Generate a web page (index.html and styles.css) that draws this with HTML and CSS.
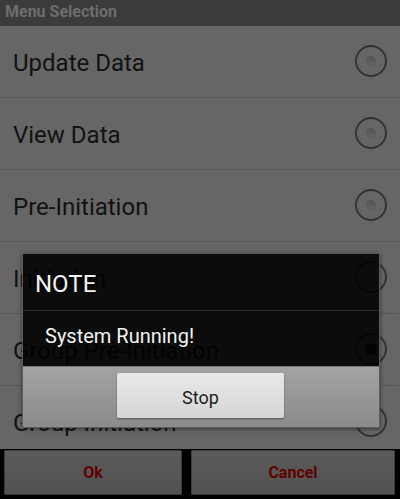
FILE: index.html
```html
<!DOCTYPE html>
<html lang="en">
<head>
    <meta charset="UTF-8">
    <meta name="viewport" content="width=device-width, initial-scale=1.0">
    <title>Menu Selection</title>
    <link rel="stylesheet" href="styles.css">
</head>
<body>
    <div class="screen">
        <div class="titlebar">Menu Selection</div>

        <div class="menu-list">
            <div class="menu-row"><span>Update Data</span><span class="radio"></span></div>
            <div class="menu-row"><span>View Data</span><span class="radio"></span></div>
            <div class="menu-row"><span>Pre-Initiation</span><span class="radio"></span></div>
            <div class="menu-row"><span>Initiation</span><span class="radio"></span></div>
            <div class="menu-row"><span>Group Pre-Initiation</span><span class="radio checked"></span></div>
            <div class="menu-row"><span>Group Initiation</span><span class="radio"></span></div>
        </div>

        <div class="actions">
            <button class="action-btn">Ok</button>
            <button class="action-btn">Cancel</button>
        </div>

        <div class="dialog">
            <div class="dialog-title">NOTE</div>
            <div class="dialog-message">System Running!</div>
            <div class="dialog-buttons">
                <button class="stop-btn">Stop</button>
            </div>
        </div>
    </div>
</body>
</html>
```

FILE: styles.css
```css
body { margin: 0; font-family: Roboto, "Liberation Sans", Arial, sans-serif; background: #000; }
.screen { position: relative; width: 400px; height: 499px; overflow: hidden; display: flex; flex-direction: column; background: #666; }

.titlebar { height: 26px; flex-shrink: 0; box-sizing: border-box; padding: 1px 0 0 5px; background: #3b3b3b; color: #6d6d6d; font-size: 16px; font-weight: bold; line-height: 22px; }

.menu-list { flex: 1; overflow: hidden; background: #666; }
.menu-row { height: 72px; box-sizing: border-box; border-bottom: 1px solid #565656; display: flex; align-items: center; justify-content: space-between; padding: 2px 13px 0; color: #121212; font-size: 24px; }
.radio { width: 28px; height: 28px; border: 2px solid #333; border-radius: 50%; display: flex; align-items: center; justify-content: center; margin: -3px 0 0 0; }
.radio::after { content: ""; width: 10px; height: 10px; border-radius: 50%; background: linear-gradient(#565656, #616161); }
.radio.checked::after { width: 12px; height: 12px; background: #17230f; }

.actions { height: 50px; flex-shrink: 0; box-sizing: border-box; padding: 1px 5px 4px 4px; background: #000; display: grid; grid-template-columns: 178px 204px; gap: 9px; }
.action-btn { margin: 0; border: 1px solid #3c3c3c; border-radius: 1px; background: linear-gradient(#5a5a5a, #525252); color: #5e0000; font-family: Roboto, "Liberation Sans", Arial, sans-serif; font-size: 16px; font-weight: bold; }

.dialog { position: absolute; left: 22px; top: 253px; width: 358px; height: 175px; box-sizing: border-box; border: 1px solid #5c5c5c; box-shadow: 0 1px 4px rgba(0,0,0,0.5); display: flex; flex-direction: column; }
.dialog-title { height: 57px; box-sizing: border-box; padding: 4px 0 0 12px; border-bottom: 1px solid #2a2a2a; background: rgba(0,0,0,0.88); color: #f2f2f2; font-size: 24px; display: flex; align-items: center; }
.dialog-message { height: 55px; box-sizing: border-box; padding: 0 0 6px 22px; background: rgba(0,0,0,0.88); color: #f2f2f2; font-size: 20px; display: flex; align-items: center; }
.dialog-buttons { flex: 1; border-top: 1px solid #777; background: linear-gradient(#a3a3a3, #8b8b8b); padding: 6px 0 0 94px; }
.stop-btn { width: 167px; height: 45px; margin: 0; padding-top: 4px; border: none; border-radius: 2px; background: linear-gradient(#e8e8e8, #d6d6d6); box-shadow: 0 1px 2px rgba(0,0,0,0.45); color: #1e1e1e; font-family: Roboto, "Liberation Sans", Arial, sans-serif; font-size: 18px; }
```
